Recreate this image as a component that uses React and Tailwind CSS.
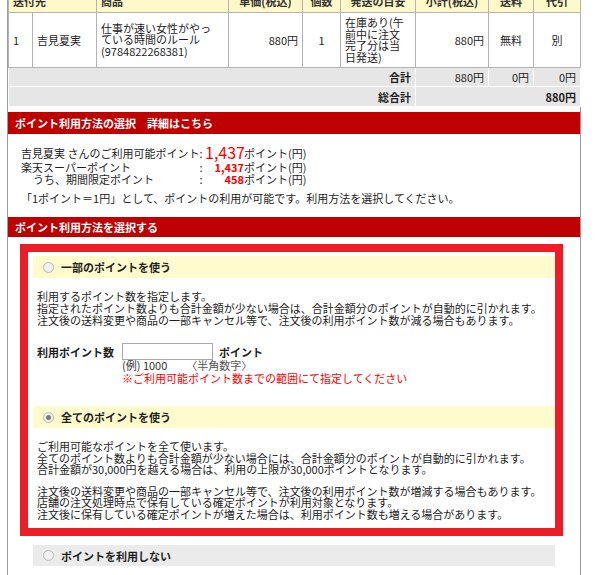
import React from "react";

function Radio({ checked }) {
  return (
    <span className="relative inline-flex w-[11px] h-[11px] rounded-full border border-[#b9b9b9] bg-[#f1f1f1] items-center justify-center shrink-0">
      {checked && <span className="w-[5px] h-[5px] rounded-full bg-[#7a7a7a]" />}
    </span>
  );
}

export default function App() {
  const td = "border border-[#b4b4b4] px-[4px] align-middle";
  const tg = "border border-white px-[4px] bg-[#e6e6e6] align-middle";
  return (
    <div className="w-[600px] h-[575px] overflow-hidden bg-white font-['Noto_Sans_CJK_JP','Noto_Sans',sans-serif] text-[11px] leading-[12px] text-[#1e1e1e]">
      <div className="ml-[7px] w-[574px] border-x border-[#9c9c9c] bg-white">
        <table className="-mt-[11px] w-full table-fixed border-collapse">
          <colgroup>
            <col className="w-[24px]" />
            <col className="w-[64px]" />
            <col className="w-[132px]" />
            <col className="w-[74px]" />
            <col className="w-[38px]" />
            <col className="w-[75px]" />
            <col className="w-[73px]" />
            <col className="w-[45px]" />
            <col className="w-[47px]" />
          </colgroup>
          <tbody>
            <tr className="h-[23px] bg-[#fff8c8] font-bold text-[#333]">
              <td colSpan={2} className={td + " text-left"}>送付先</td>
              <td className={td + " text-left"}>商品</td>
              <td className={td + " text-center"}>単価(税込)</td>
              <td className={td + " text-center"}>個数</td>
              <td className={td + " text-center"}>発送の目安</td>
              <td className={td + " text-center"}>小計(税込)</td>
              <td className={td + " text-center"}>送料</td>
              <td className={td + " text-center"}>代引</td>
            </tr>
            <tr className="h-[55px]">
              <td className={td}>1</td>
              <td className={td}>吉見夏実</td>
              <td className={td + " leading-[11.5px]"}>
                仕事が速い女性がやっ<br />ている時間のルール<br />(9784822268381)
              </td>
              <td className={td + " text-right"}>880円</td>
              <td className={td + " text-center"}>1</td>
              <td className={td + " leading-[11.5px]"}>
                在庫あり(午<br />前中に注文<br />完了分は当<br />日発送)
              </td>
              <td className={td + " text-right"}>880円</td>
              <td className={td + " text-center"}>無料</td>
              <td className={td + " text-center"}>別</td>
            </tr>
            <tr className="h-[19px]">
              <td colSpan={6} className={tg + " text-right font-bold"}>合計</td>
              <td className={tg + " text-right"}>880円</td>
              <td className={tg + " text-right"}>0円</td>
              <td className={tg + " text-right"}>0円</td>
            </tr>
            <tr className="h-[20px]">
              <td colSpan={6} className={tg + " text-right font-bold"}>総合計</td>
              <td colSpan={3} className={tg + " text-right font-bold"}>880円</td>
            </tr>
          </tbody>
        </table>

        <div className="h-[5px]" />
        <div className="h-[22px] bg-[#bf0000] text-white font-bold flex items-center pl-[7px]">
          ポイント利用方法の選択　詳細はこちら
        </div>

        <div className="pl-[13px] pt-[10px] pb-[13px]">
          <div className="grid grid-cols-[176px_8px_39px_auto] items-end whitespace-nowrap">
            <div className="leading-[16px]">吉見夏実 さんのご利用可能ポイント</div>
            <div className="text-center leading-[16px]">:</div>
            <div className="text-right text-[16px] leading-[17px] text-[#ff0000]">1,437</div>
            <div className="leading-[16px]">ポイント(円)</div>

            <div className="leading-[12px]">楽天スーパーポイント</div>
            <div className="text-center leading-[12px]">:</div>
            <div className="text-right font-bold text-[#ff0000] leading-[12px]">1,437</div>
            <div className="leading-[12px]">ポイント(円)</div>

            <div className="pl-[12px] leading-[12px]">うち、期間限定ポイント</div>
            <div className="text-center leading-[12px]">:</div>
            <div className="text-right font-bold text-[#ff0000] leading-[12px]">458</div>
            <div className="leading-[12px]">ポイント(円)</div>
          </div>
          <div className="mt-[7px] leading-[12px]">
            「1ポイント＝1円」として、ポイントの利用が可能です。利用方法を選択してください。
          </div>
        </div>

        <div className="h-[20px] bg-[#bf0000] text-white font-bold flex items-center pl-[7px]">
          ポイント利用方法を選択する
        </div>

        <div className="pt-[7px] pb-[10px]">
          <div className="ml-[12px] w-[543px] border-[8px] border-[#ee1c24] pt-[4px] pl-[5px] pb-[8px]">
            <div className="h-[22px] bg-[#fffbcc] flex items-center pl-[10px] gap-[7px] font-bold">
              <Radio />
              <span>一部のポイントを使う</span>
            </div>
            <div className="pl-[4px] pt-[12px]">
              <div>利用するポイント数を指定します。</div>
              <div>指定されたポイント数よりも合計金額が少ない場合は、合計金額分のポイントが自動的に引かれます。</div>
              <div>注文後の送料変更や商品の一部キャンセル等で、注文後の利用ポイント数が減る場合もあります。</div>
              <div className="mt-[17px] flex items-center">
                <span className="w-[85px] font-bold">利用ポイント数</span>
                <span className="w-[91px] h-[17px] border border-[#a9a9a9] bg-white" />
                <span className="ml-[6px] font-bold">ポイント</span>
              </div>
              <div className="pl-[85px] leading-[11px]">
                <div className="text-[#333]">
                  (例) 1000<span className="ml-[19px] text-[#555]">〈半角数字〉</span>
                </div>
                <div className="mt-[2px] text-[#ff0000]">※ご利用可能ポイント数までの範囲にて指定してください</div>
              </div>
            </div>

            <div className="mt-[22px] h-[22px] bg-[#fffbcc] flex items-center pl-[10px] gap-[7px] font-bold">
              <Radio checked />
              <span>全てのポイントを使う</span>
            </div>
            <div className="pl-[4px] pt-[13px] leading-[11.5px]">
              <div>ご利用可能なポイントを全て使います。</div>
              <div>全てのポイント数よりも合計金額が少ない場合には、合計金額分のポイントが自動的に引かれます。</div>
              <div>合計金額が30,000円を越える場合は、利用の上限が30,000ポイントとなります。</div>
              <div className="mt-[10px]">注文後の送料変更や商品の一部キャンセル等で、注文後の利用ポイント数が増減する場合もあります。</div>
              <div>店舗の注文処理時点で保有している確定ポイントが利用対象となります。</div>
              <div>注文後に保有している確定ポイントが増えた場合は、利用ポイント数も増える場合があります。</div>
            </div>
          </div>

          <div className="mt-[9px] ml-[25px] w-[522px] h-[21px] bg-[#ebebeb] flex items-center pl-[10px] gap-[7px] font-bold">
            <Radio />
            <span>ポイントを利用しない</span>
          </div>
        </div>
      </div>
    </div>
  );
}
